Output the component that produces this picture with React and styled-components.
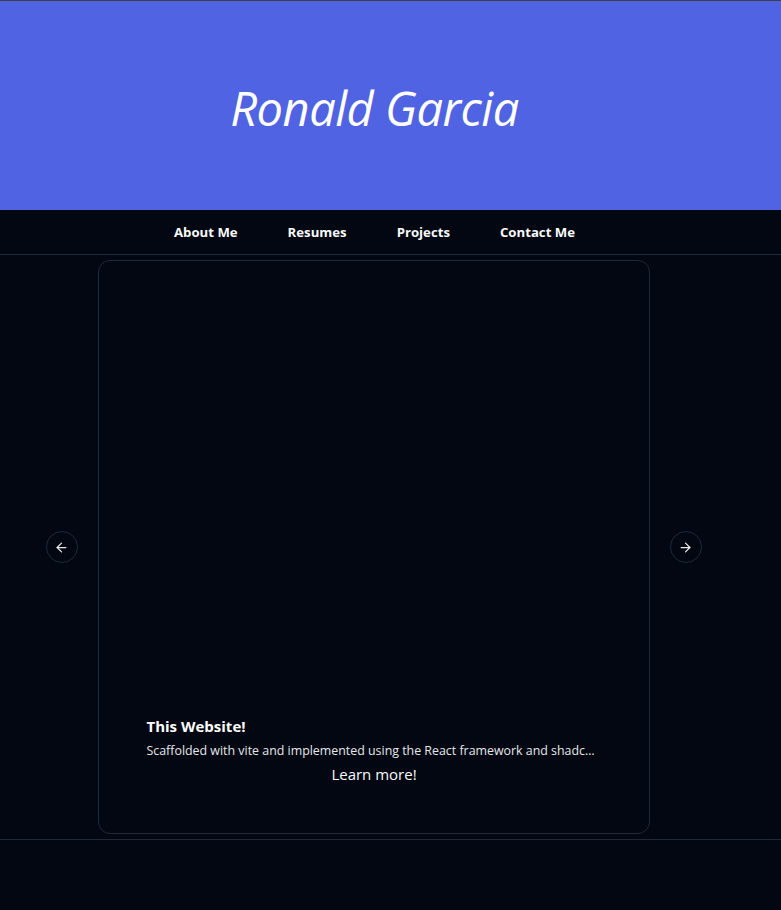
import React from "react";
import styled, { createGlobalStyle } from "styled-components";
import { ArrowLeft, ArrowRight } from "lucide-react";

const GlobalStyle = createGlobalStyle`
  html, body {
    margin: 0;
    padding: 0;
    background: #030712;
    font-family: "Open Sans", "Noto Sans", sans-serif;
    color: #f9fafb;
  }
`;

const navItems = ["About Me", "Resumes", "Projects", "Contact Me"];

export default function App() {
  return (
    <>
      <GlobalStyle />
      <StPage>
        <StHeader>
          <StTitle>Ronald Garcia</StTitle>
        </StHeader>
        <StNav>
          <StNavList>
            {navItems.map((item) => (
              <StNavItem key={item}>{item}</StNavItem>
            ))}
          </StNavList>
        </StNav>
        <StCarouselSection>
          <StCarousel>
            <StArrowButton aria-label="Previous slide">
              <ArrowLeft size={15} strokeWidth={2} />
            </StArrowButton>
            <StCard>
              <StCardBody>
                <StCardTitle>This Website!</StCardTitle>
                <StCardText>
                  Scaffolded with vite and implemented using the React framework
                  and shadcn/ui components, styled with Tailwind CSS.
                </StCardText>
                <StLearnMore>Learn more!</StLearnMore>
              </StCardBody>
            </StCard>
            <StArrowButton aria-label="Next slide">
              <ArrowRight size={15} strokeWidth={2} />
            </StArrowButton>
          </StCarousel>
        </StCarouselSection>
      </StPage>
    </>
  );
}

const StPage = styled.div`
  min-height: 910px;
  background: #030712;
`;

const StHeader = styled.header`
  height: 209px;
  border-top: 1px solid #3f3f46;
  background: #4f63e3;
  display: flex;
  align-items: center;
  justify-content: center;
  padding-right: 32px;
`;

const StTitle = styled.h1`
  margin: 4px 0 0;
  font-size: 47px;
  font-style: italic;
  font-weight: 400;
  color: #ffffff;
  letter-spacing: -0.5px;
`;

const StNav = styled.nav`
  height: 44px;
  border-bottom: 1px solid #1f2937;
  display: flex;
  justify-content: center;
  padding-right: 32px;
`;

const StNavList = styled.div`
  display: flex;
  align-items: center;
  gap: 0 50px;
`;

const StNavItem = styled.span`
  font-size: 13.2px;
  font-weight: 700;
  color: #f9fafb;
  cursor: pointer;
`;

const StCarouselSection = styled.section`
  padding: 5px 0 5px;
  border-bottom: 1px solid #1f2937;
`;

const StCarousel = styled.div`
  width: 747px;
  display: flex;
  align-items: center;
  justify-content: center;
  gap: 0 20px;
`;

const StArrowButton = styled.button`
  width: 32px;
  height: 32px;
  border-radius: 50%;
  border: 1px solid #1f2937;
  background: #030712;
  color: #e5e7eb;
  display: flex;
  align-items: center;
  justify-content: center;
  padding: 0;
  cursor: pointer;
`;

const StCard = styled.div`
  box-sizing: border-box;
  width: 552px;
  height: 574px;
  border: 1px solid #1f2937;
  border-radius: 12px;
  background: #030712;
  display: flex;
  flex-direction: column;
  justify-content: flex-end;
`;

const StCardBody = styled.div`
  padding: 0 47px 49px 48px;
  display: flex;
  flex-direction: column;
`;

const StCardTitle = styled.h3`
  margin: 0 0 6px;
  font-size: 15px;
  font-weight: 700;
  color: #ffffff;
`;

const StCardText = styled.p`
  margin: 0 0 5px;
  font-size: 12.4px;
  color: #e5e7eb;
  white-space: nowrap;
  overflow: hidden;
  text-overflow: ellipsis;
`;

const StLearnMore = styled.a`
  align-self: center;
  font-size: 15px;
  color: #f9fafb;
  cursor: pointer;
`;
